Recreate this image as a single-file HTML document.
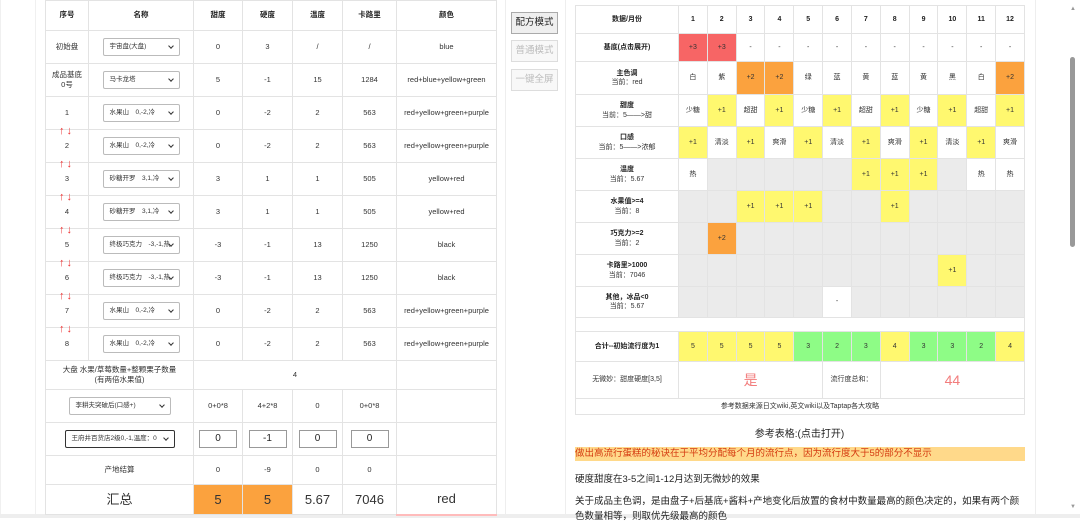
<!DOCTYPE html>
<html><head><meta charset="utf-8"><style>
*{box-sizing:border-box;margin:0;padding:0}
body{width:1080px;height:518px;overflow:hidden;background:#fff;font-family:"Liberation Sans","Noto Sans CJK SC",sans-serif;color:#333;position:relative}
.frame{position:absolute;border:1px solid #eee}
table{border-collapse:collapse;table-layout:fixed;position:absolute}
td{border:1px solid #e3e3e3;text-align:center;vertical-align:middle;font-size:7.5px;overflow:hidden;white-space:nowrap;line-height:1.35}
.L td{font-size:7.5px}
.sel{display:inline-block;width:77px;height:18px;border:1px solid #bbb;border-radius:2px;text-align:left;font-size:6.5px;line-height:16px;padding-left:6px;position:relative;background:#fff;color:#333}
.sel:after{content:"";position:absolute;right:6px;top:5px;width:3px;height:3px;border-right:1px solid #333;border-bottom:1px solid #333;transform:rotate(45deg)}
.inp{display:inline-block;width:38px;height:18px;border:1px solid #999;font-size:10px;line-height:16px;color:#222}
b{font-weight:bold;color:#222}
.arr{position:absolute;color:#e33;font-size:11px;line-height:11px;left:59px;letter-spacing:2px}
.R td{font-size:7px}
.r{background:#f76565}.o{background:#fba23e}.y{background:#fff86f}.g{background:#8efc86}.gr{background:#ebebeb}
.btn{position:absolute;left:511px;width:47px;height:22px;border:1px solid #ddd;font-size:9.5px;text-align:center;line-height:20px;color:#bbb;background:#f8f8f8}
p{position:absolute;left:575px;font-size:9.5px;color:#222}
</style></head><body>
<div class="frame" style="left:35px;top:-2px;width:471px;height:518px"></div>
<div class="frame" style="left:565px;top:-2px;width:471px;height:518px"></div>
<div class="frame" style="left:0;top:-2px;width:36px;height:518px;border-color:#f0f0f0"></div>
<div style="position:absolute;left:0;top:514px;width:1080px;height:4px;background:#eee"></div>

<table class="L" style="left:45px;top:0;width:451px">
<colgroup><col style="width:43px"><col style="width:105px"><col style="width:49px"><col style="width:50px"><col style="width:50px"><col style="width:54px"><col style="width:100px"></colgroup>
<tr style="height:30px"><td><b>序号</b></td><td><b>名称</b></td><td><b>甜度</b></td><td><b>硬度</b></td><td><b>温度</b></td><td><b>卡路里</b></td><td><b>颜色</b></td></tr>
<tr style="height:33px"><td>初始盘</td><td><span class="sel">宇宙盘(大盘)</span></td><td>0</td><td>3</td><td>/</td><td>/</td><td>blue</td></tr>
<tr style="height:33px;border-bottom:1.5px solid #333"><td>成品基底<br>0号</td><td><span class="sel">马卡龙塔</span></td><td>5</td><td>-1</td><td>15</td><td>1284</td><td>red+blue+yellow+green</td></tr>
<tr style="height:33px"><td>1</td><td><span class="sel">水果山　0,-2,冷</span></td><td>0</td><td>-2</td><td>2</td><td>563</td><td>red+yellow+green+purple</td></tr>
<tr style="height:33px"><td>2</td><td><span class="sel">水果山　0,-2,冷</span></td><td>0</td><td>-2</td><td>2</td><td>563</td><td>red+yellow+green+purple</td></tr>
<tr style="height:33px"><td>3</td><td><span class="sel">砂糖开罗　3,1,冷</span></td><td>3</td><td>1</td><td>1</td><td>505</td><td>yellow+red</td></tr>
<tr style="height:33px"><td>4</td><td><span class="sel">砂糖开罗　3,1,冷</span></td><td>3</td><td>1</td><td>1</td><td>505</td><td>yellow+red</td></tr>
<tr style="height:33px"><td>5</td><td><span class="sel">终极巧克力　-3,-1,热</span></td><td>-3</td><td>-1</td><td>13</td><td>1250</td><td>black</td></tr>
<tr style="height:33px"><td>6</td><td><span class="sel">终极巧克力　-3,-1,热</span></td><td>-3</td><td>-1</td><td>13</td><td>1250</td><td>black</td></tr>
<tr style="height:33px"><td>7</td><td><span class="sel">水果山　0,-2,冷</span></td><td>0</td><td>-2</td><td>2</td><td>563</td><td>red+yellow+green+purple</td></tr>
<tr style="height:33px;border-bottom:1.5px solid #e66"><td>8</td><td><span class="sel">水果山　0,-2,冷</span></td><td>0</td><td>-2</td><td>2</td><td>563</td><td>red+yellow+green+purple</td></tr>
<tr style="height:29px"><td colspan="2">大盘 水果/草莓数量+整颗栗子数量<br>(有两倍水果值)</td><td colspan="4">4</td><td></td></tr>
<tr style="height:33px"><td colspan="2"><span class="sel" style="width:102px">李耕夫突破后(口感+)</span></td><td>0+0*8</td><td>4+2*8</td><td>0</td><td>0+0*8</td><td></td></tr>
<tr style="height:33px"><td colspan="2"><span class="sel" style="width:110px;border-color:#333">王府井百货店2级0,-1,温度：0</span></td><td><span class="inp">0</span></td><td><span class="inp">-1</span></td><td><span class="inp">0</span></td><td><span class="inp">0</span></td><td></td></tr>
<tr style="height:29px"><td colspan="2">产地结算</td><td>0</td><td>-9</td><td>0</td><td>0</td><td></td></tr>
<tr style="height:30px;font-size:13px"><td colspan="2" style="font-size:13px">汇总</td><td class="o" style="font-size:13px">5</td><td class="o" style="font-size:13px">5</td><td style="font-size:13px">5.67</td><td style="font-size:13px">7046</td><td style="font-size:13px;border-bottom:2px solid #fbb">red</td></tr>
</table>
<span class="arr" style="top:126px">↑↓</span><span class="arr" style="top:159px">↑↓</span><span class="arr" style="top:192px">↑↓</span><span class="arr" style="top:225px">↑↓</span><span class="arr" style="top:258px">↑↓</span><span class="arr" style="top:291px">↑↓</span><span class="arr" style="top:324px">↑↓</span>

<div class="btn" style="top:12px;background:#efefef;border-color:#aaa;color:#222">配方模式</div>
<div class="btn" style="top:40px">普通模式</div>
<div class="btn" style="top:69px">一键全屏</div>

<table class="R" style="left:575px;top:5px;width:449px">
<colgroup><col style="width:103px"><col span="12" style="width:28.83px"></colgroup>
<tr style="height:28px"><td><b>数据/月份</b></td><td><b>1</b></td><td><b>2</b></td><td><b>3</b></td><td><b>4</b></td><td><b>5</b></td><td><b>6</b></td><td><b>7</b></td><td><b>8</b></td><td><b>9</b></td><td><b>10</b></td><td><b>11</b></td><td><b>12</b></td></tr>
<tr style="height:28px"><td><b>基底(点击展开)</b></td><td class="r">+3</td><td class="r">+3</td><td>-</td><td>-</td><td>-</td><td>-</td><td>-</td><td>-</td><td>-</td><td>-</td><td>-</td><td>-</td></tr>
<tr style="height:33px"><td><b>主色调</b><br>当前：red</td><td>白</td><td>紫</td><td class="o">+2</td><td class="o">+2</td><td>绿</td><td>蓝</td><td>黄</td><td>蓝</td><td>黄</td><td>黑</td><td>白</td><td class="o">+2</td></tr>
<tr style="height:32px"><td><b>甜度</b><br>当前：5——&gt;甜</td><td>少糖</td><td class="y">+1</td><td>超甜</td><td class="y">+1</td><td>少糖</td><td class="y">+1</td><td>超甜</td><td class="y">+1</td><td>少糖</td><td class="y">+1</td><td>超甜</td><td class="y">+1</td></tr>
<tr style="height:32px"><td><b>口感</b><br>当前：5——&gt;浓郁</td><td class="y">+1</td><td>清淡</td><td class="y">+1</td><td>爽滑</td><td class="y">+1</td><td>清淡</td><td class="y">+1</td><td>爽滑</td><td class="y">+1</td><td>清淡</td><td class="y">+1</td><td>爽滑</td></tr>
<tr style="height:32px"><td><b>温度</b><br>当前：5.67</td><td>热</td><td class="gr"></td><td class="gr"></td><td class="gr"></td><td class="gr"></td><td class="gr"></td><td class="y">+1</td><td class="y">+1</td><td class="y">+1</td><td class="gr"></td><td>热</td><td>热</td></tr>
<tr style="height:32px"><td><b>水果值&gt;=4</b><br>当前：8</td><td class="gr"></td><td class="gr"></td><td class="y">+1</td><td class="y">+1</td><td class="y">+1</td><td class="gr"></td><td class="gr"></td><td class="y">+1</td><td class="gr"></td><td class="gr"></td><td class="gr"></td><td class="gr"></td></tr>
<tr style="height:32px"><td><b>巧克力&gt;=2</b><br>当前：2</td><td class="gr"></td><td class="o">+2</td><td class="gr"></td><td class="gr"></td><td class="gr"></td><td class="gr"></td><td class="gr"></td><td class="gr"></td><td class="gr"></td><td class="gr"></td><td class="gr"></td><td class="gr"></td></tr>
<tr style="height:32px"><td><b>卡路里&gt;1000</b><br>当前：7046</td><td class="gr"></td><td class="gr"></td><td class="gr"></td><td class="gr"></td><td class="gr"></td><td class="gr"></td><td class="gr"></td><td class="gr"></td><td class="gr"></td><td class="y">+1</td><td class="gr"></td><td class="gr"></td></tr>
<tr style="height:31px"><td><b>其他，冰品&lt;0</b><br>当前：5.67</td><td class="gr"></td><td class="gr"></td><td class="gr"></td><td class="gr"></td><td class="gr"></td><td>-</td><td class="gr"></td><td class="gr"></td><td class="gr"></td><td class="gr"></td><td class="gr"></td><td class="gr"></td></tr>
<tr style="height:14px"><td colspan="13"></td></tr>
<tr style="height:30px"><td><b>合计--初始流行度为1</b></td><td class="y">5</td><td class="y">5</td><td class="y">5</td><td class="y">5</td><td class="g">3</td><td class="g">2</td><td class="g">3</td><td class="y">4</td><td class="g">3</td><td class="g">3</td><td class="g">2</td><td class="y">4</td></tr>
<tr style="height:37px"><td>无微妙：甜度硬度[3,5]</td><td colspan="5" style="font-size:14px;color:#f27c7c">是</td><td colspan="2">流行度总和：</td><td colspan="5" style="font-size:14px;color:#f27c7c">44</td></tr>
<tr style="height:16px"><td colspan="13">参考数据来源日文wiki,英文wiki以及Taptap各大攻略</td></tr>
</table>

<p style="top:425px;width:449px;text-align:center;font-size:10px">参考表格:(点击打开)</p>
<p style="top:447px;width:450px;height:14px;background:#ffd98a;color:#d43a10;line-height:14px">做出高流行蛋糕的秘诀在于平均分配每个月的流行点，因为流行度大于5的部分不显示</p>
<p style="top:471px">硬度甜度在3-5之间1-12月达到无微妙的效果</p>
<p style="top:494px;width:446px;line-height:15px">关于成品主色调，是由盘子+后基底+酱料+产地变化后放置的食材中数量最高的颜色决定的，如果有两个颜色数量相等，则取优先级最高的颜色</p>

<div style="position:absolute;left:1036px;top:0;width:44px;height:514px;background:#fff"></div>
<div style="position:absolute;left:1035px;top:-2px;width:1px;height:518px;background:#eee"></div>
<div style="position:absolute;left:1070px;top:57px;width:5px;height:190px;background:#999;border-radius:3px"></div>
<div style="position:absolute;left:1070px;top:6px;font-size:6px;color:#999">▲</div>
<div style="position:absolute;left:1070px;top:504px;font-size:6px;color:#999">▼</div>
</body></html>
